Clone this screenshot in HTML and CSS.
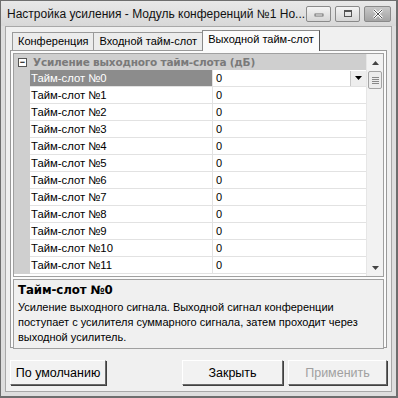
FILE: index.html
```html
<!DOCTYPE html>
<html>
<head>
<meta charset="utf-8">
<link rel="stylesheet" href="styles.css">
</head>
<body>
<div class="window">
  <div class="titlebar">
    <span class="title">Настройка усиления - Модуль конференций №1 Но...</span>
    <div class="tbtns">
      <span class="tbtn"><svg width="10" height="6" viewBox="0 0 10 6"><rect x="1" y="3" width="8" height="2" fill="#fff" stroke="#555" stroke-width="0.8"/></svg></span>
      <span class="tbtn"><svg width="10" height="9" viewBox="0 0 10 9"><rect x="1.5" y="1.5" width="7" height="6" fill="none" stroke="#555" stroke-width="1"/><rect x="1.5" y="1.5" width="7" height="1.5" fill="#555"/></svg></span>
      <span class="tbtn close"><svg width="14" height="10" viewBox="0 0 14 10"><path d="M3 1 L11 9 M11 1 L3 9" stroke="#fff" stroke-width="2.6"/><path d="M3 1 L11 9 M11 1 L3 9" stroke="#555" stroke-width="1"/></svg></span>
    </div>
  </div>
  <div class="client">
    <div class="tabs">
      <span class="tab">Конференция</span>
      <span class="tab">Входной тайм-слот</span>
      <span class="tab active">Выходной тайм-слот</span>
    </div>
    <div class="panel">
      <div class="grid">
        <div class="gridbody">
          <div class="cat"><span class="minus">−</span><span>Усиление выходного тайм-слота (дБ)</span></div>
          <div class="row sel"><span class="margin"></span><span class="name">Тайм-слот №0</span><span class="val">0<span class="drop"><svg width="7" height="4" viewBox="0 0 7 4"><path d="M0 0 H7 L3.5 4Z" fill="#000"/></svg></span></span></div>
          <div class="row"><span class="margin"></span><span class="name">Тайм-слот №1</span><span class="val">0</span></div>
          <div class="row"><span class="margin"></span><span class="name">Тайм-слот №2</span><span class="val">0</span></div>
          <div class="row"><span class="margin"></span><span class="name">Тайм-слот №3</span><span class="val">0</span></div>
          <div class="row"><span class="margin"></span><span class="name">Тайм-слот №4</span><span class="val">0</span></div>
          <div class="row"><span class="margin"></span><span class="name">Тайм-слот №5</span><span class="val">0</span></div>
          <div class="row"><span class="margin"></span><span class="name">Тайм-слот №6</span><span class="val">0</span></div>
          <div class="row"><span class="margin"></span><span class="name">Тайм-слот №7</span><span class="val">0</span></div>
          <div class="row"><span class="margin"></span><span class="name">Тайм-слот №8</span><span class="val">0</span></div>
          <div class="row"><span class="margin"></span><span class="name">Тайм-слот №9</span><span class="val">0</span></div>
          <div class="row"><span class="margin"></span><span class="name">Тайм-слот №10</span><span class="val">0</span></div>
          <div class="row"><span class="margin"></span><span class="name">Тайм-слот №11</span><span class="val">0</span></div>
        </div>
        <div class="scroll">
          <span class="arrow"><svg width="7" height="4" viewBox="0 0 7 4"><path d="M0 4 H7 L3.5 0Z" fill="#444"/></svg></span>
          <span class="thumb"><svg width="7" height="8" viewBox="0 0 7 8"><path d="M0 1.5H7M0 3.5H7M0 5.5H7M0 7.5H7" stroke="#888" stroke-width="1"/></svg></span>
          <span class="track"></span>
          <span class="arrow"><svg width="7" height="4" viewBox="0 0 7 4"><path d="M0 0 H7 L3.5 4Z" fill="#444"/></svg></span>
        </div>
      </div>
      <div class="desc">
        <div class="dtitle">Тайм-слот №0</div>
        <div class="dtext">Усиление выходного сигнала. Выходной сигнал конференции поступает с усилителя суммарного сигнала, затем проходит через выходной усилитель.</div>
      </div>
    </div>
    <div class="buttons">
      <button class="btn wide">По умолчанию</button>
      <span class="spacer"></span>
      <button class="btn close-btn">Закрыть</button>
      <button class="btn disabled">Применить</button>
    </div>
  </div>
</div>
</body>
</html>
```
FILE: styles.css
```css
* { box-sizing: border-box; }
html, body { margin: 0; padding: 0; }
body {
  width: 398px; height: 398px; overflow: hidden;
  font-family: "Liberation Sans", Arial, sans-serif;
  font-size: 11px; color: #000;
  background: #f0f0f0;
}
.window {
  width: 398px; height: 398px;
  border: 1px solid #6e6e6e;
  border-right-width: 2px;
  border-bottom-width: 2px;
  background: #dedede;
  display: flex; flex-direction: column;
}
.titlebar {
  height: 25px; flex: none;
  display: flex; align-items: center;
  padding: 0 5px 0 6px;
  background: linear-gradient(#e8e8e8, #d8d8d8);
}
.title { font-size: 12px; flex: 1; white-space: nowrap; color: #111; padding-top: 1px; }
.tbtns { display: flex; gap: 4px; }
.tbtn {
  width: 25px; height: 16px;
  border: 1px solid #8a8a8a; border-radius: 2px;
  background: linear-gradient(#f4f4f4, #d6d6d6);
  display: flex; align-items: center; justify-content: center;
}
.tbtn.close { width: 27px; background: linear-gradient(#c8c8c8, #a4a4a4); }
.client {
  flex: 1;
  margin: 0 4px 4px 4px;
  border: 1px solid #a8a8a8;
  background: #f0f0f0;
  padding: 3px 4px 0 4px;
  display: flex; flex-direction: column;
}
.tabs { display: flex; padding-left: 2px; height: 20px; align-items: flex-end; }
.tab {
  height: 18px; padding: 0 5px; line-height: 17px;
  border: 1px solid #9a9a9a; border-bottom: none;
  background: #ececec; margin-right: -1px;
}
.tab.active {
  height: 21px; background: #fbfbfb; position: relative; top: 1px;
  border-color: #8a8a8a; border-right-color: #555; padding: 0 5px; margin-left: 0;
}
.panel {
  border: 1px solid #9a9a9a;
  background: #fbfbfb;
  padding: 2px 2px 3px 2px;
  height: 298px;
  display: flex; flex-direction: column; gap: 2px;
}
.grid {
  display: flex; height: 224px; flex: none;
  border: 1px solid #a0a0a0;
  background: #fff;
}
.gridbody { flex: 1; display: flex; flex-direction: column; }
.cat {
  height: 16px; background: #cfcfcf; display: flex; align-items: center;
  color: #7a7a7a; font-weight: bold; font-family: "DejaVu Sans", Verdana, sans-serif; font-size: 10.5px; letter-spacing: -0.2px;
}
.minus {
  width: 9px; height: 9px; border: 1px solid #555; background: #fff;
  color: #000; font-size: 9px; line-height: 6px; display: inline-flex; justify-content: center;
  margin: 0 6px 0 4px; font-family: "Liberation Sans", Arial, sans-serif; letter-spacing: 0;
}
.row { height: 17px; display: flex; }
.margin { width: 16px; background: #cfcfcf; flex: none; }
.name {
  width: 183px; flex: none; padding-left: 1px; line-height: 16px; font-size: 11.3px;
  border-bottom: 1px solid #e2e2e2; border-right: 1px solid #e2e2e2;
}
.val {
  flex: 1; padding-left: 3px; line-height: 16px; border-bottom: 1px solid #e2e2e2;
  display: flex; align-items: center; justify-content: space-between;
}
.row.sel .name { background: #8c8c8c; color: #fff; }
.drop {
  width: 16px; height: 15px; display: flex; align-items: center; justify-content: center;
  background: #eeeeee; border-left: 1px solid #c8c8c8;
}
.scroll { width: 17px; flex: none; display: flex; flex-direction: column; background: #f2f2f2; border-left: 1px solid #e6e6e6; }
.arrow { height: 17px; display: flex; align-items: center; justify-content: center; }
.thumb {
  height: 18px; margin: 0 1px; border: 1px solid #a4a4a4; background: #ececec;
  display: flex; align-items: center; justify-content: center; border-radius: 2px;
}
.track { flex: 1; }
.desc {
  flex: 1; border: 1px solid #a0a0a0; background: #f0f0f0;
  padding: 3px 4px;
}
.dtitle { font-weight: bold; margin-bottom: 3px; font-family: "DejaVu Sans", Verdana, sans-serif; font-size: 11.8px; letter-spacing: -0.1px; }
.dtext { line-height: 15px; }
.buttons { display: flex; padding: 12px 0 0 0; gap: 5px; }
.spacer { flex: 1; }
.btn {
  height: 25px; width: 99px;
  font-family: "Liberation Sans", Arial, sans-serif; font-size: 12.5px;
  background: #f2f2f2; border: 1px solid #7a7a7a;
  border-color: #ffffff #6a6a6a #6a6a6a #ffffff;
  box-shadow: 1px 1px 0 #404040;
  padding: 0; color: #000;
}
.btn.wide { width: 96px; }
.btn.close-btn { width: 101px; }
.btn.disabled { color: #a0a0a0; }
```
